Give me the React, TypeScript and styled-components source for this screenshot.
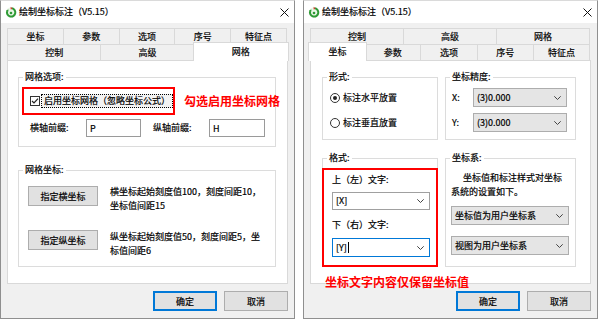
import styled, { createGlobalStyle, css } from 'styled-components';

const GlobalStyle = createGlobalStyle`
  html, body {
    margin: 0;
    background: #ffffff;
  }
  body {
    font-family: "Noto Sans CJK SC", "Microsoft YaHei", sans-serif;
    font-size: 9px;
    color: #000;
    -webkit-text-stroke: 0.2px currentColor;
  }
  * {
    box-sizing: border-box;
  }
`;

const Desktop = styled.div`
  display: flex;
  gap: 8px;
  width: 600px;
  height: 320px;
`;

const Window = styled.div`
  width: 295px;
  height: 319px;
  display: flex;
  flex-direction: column;
  background: #f0f0f0;
  border: 1px solid #8f8f8f;
  border-top-color: #dadada;
`;

const TitleBar = styled.div`
  height: 22px;
  flex: none;
  display: flex;
  align-items: center;
  gap: 2px;
  padding: 0 5px 0 4px;
  background: #fff;

  & .title {
    flex: 1;
    line-height: 12px;
  }
`;

const Body = styled.div`
  flex: 1;
  display: flex;
  flex-direction: column;
  padding: 5px 6px 0;
`;

const Tabs = styled.div`
  width: 280px;
  display: flex;
  flex-direction: column;
`;

const TabRow = styled.div`
  display: flex;
  height: 16px;
`;

const Tab = styled.div<{ $active?: boolean }>`
  flex: 1 1 0;
  min-width: 0;
  display: flex;
  align-items: center;
  justify-content: center;
  background: #f0f0f0;
  border: 1px solid #d9d9d9;
  border-bottom: none;
  margin-left: -1px;
  line-height: 12px;

  &:first-child {
    margin-left: 0;
  }

  ${(p) =>
    p.$active &&
    css`
      && {
        flex-basis: 4px;
        position: relative;
        z-index: 1;
        margin: -2px -2px -1px;
        background: #fff;
      }
    `}
`;

const Panel = styled.div<{ $pad: string }>`
  position: relative;
  height: 224px;
  background: #fff;
  border: 1px solid #d9d9d9;
  padding: ${(p) => p.$pad};
`;

const Group = styled.fieldset<{ $gap?: number }>`
  margin: ${(p) => p.$gap ?? 0}px 0 0;
  padding: 0;
  min-width: 0;
  border: 1px solid #dcdcdc;
`;

const Legend = styled.legend`
  margin-left: 4px;
  padding: 0 2px;
  line-height: 12px;
`;

const GroupBody = styled.div<{ $pad: string }>`
  display: flex;
  flex-direction: column;
  padding: ${(p) => p.$pad};
`;

const Row = styled.div<{ $top?: number; $gap?: number; $align?: string; $indent?: number }>`
  display: flex;
  align-items: ${(p) => p.$align ?? 'center'};
  gap: ${(p) => p.$gap ?? 0}px;
  margin-top: ${(p) => p.$top ?? 0}px;
  padding-left: ${(p) => p.$indent ?? 0}px;
`;

const RedFrame = styled.div<{ $w?: number }>`
  border: 2px solid #ff0000;
  ${(p) => p.$w && `width: ${p.$w}px;`}
`;

const CheckRow = styled(RedFrame)`
  height: 28px;
  display: flex;
  align-items: center;
  padding-left: 6px;
  margin-left: 3px;
`;

const CheckLabel = styled.span`
  margin-left: 1px;
  padding: 0 2px;
  line-height: 12px;
  border: 1px dotted #000;
  background: #f3f3f3;
  white-space: nowrap;
`;

const Note = styled.span`
  font-size: 12px;
  font-weight: bold;
  line-height: 16px;
  color: #ff0000;
  white-space: nowrap;
  -webkit-text-stroke: 0;
`;

const FloatingNote = styled(Note)`
  position: absolute;
  left: 14px;
  top: 213px;
`;

const FieldLabel = styled.span<{ $w: number; $left?: number; $top?: number }>`
  width: ${(p) => p.$w}px;
  margin-left: ${(p) => p.$left ?? 0}px;
  margin-top: ${(p) => p.$top ?? 0}px;
  line-height: 12px;
  white-space: nowrap;
`;

const TextBox = styled.div<{ $w: number }>`
  width: ${(p) => p.$w}px;
  height: 18px;
  display: flex;
  align-items: center;
  padding-left: 3px;
  background: #fff;
  border: 1px solid #9a9a9a;
`;

const Button = styled.button<{ $w?: number; $default?: boolean; $top?: number }>`
  flex: none;
  width: ${(p) => p.$w ?? 64}px;
  height: 20px;
  margin-top: ${(p) => p.$top ?? 0}px;
  padding: 0;
  font: inherit;
  color: #000;
  background: #e1e1e1;
  border: 1px solid ${(p) => (p.$default ? '#0078d7' : '#adadad')};
  ${(p) => p.$default && 'box-shadow: inset 0 0 0 1px #0078d7;'}
`;

const Desc = styled.div`
  line-height: 14px;
  white-space: nowrap;
`;

const Footer = styled.div`
  display: flex;
  justify-content: flex-end;
  gap: 7px;
  width: 281px;
  margin-top: 7px;
`;

const Columns = styled.div`
  display: grid;
  grid-template-columns: 116px 131px;
  column-gap: 7px;
  row-gap: 12px;
`;

const Radio = styled.span<{ $on?: boolean }>`
  width: 10px;
  height: 10px;
  border-radius: 50%;
  border: 1px solid #333;
  display: flex;
  align-items: center;
  justify-content: center;

  &::after {
    content: '';
    width: 4px;
    height: 4px;
    border-radius: 50%;
    background: ${(p) => (p.$on ? '#222' : 'transparent')};
  }
`;

const OptionRow = styled.div<{ $top: number }>`
  height: 19px;
  display: flex;
  align-items: center;
  gap: 3px;
  margin-top: ${(p) => p.$top}px;
  line-height: 12px;
`;

type ComboKind = 'list' | 'edit' | 'focus';

const ComboBox = styled.div<{ $kind: ComboKind; $w: number; $h?: number; $top?: number }>`
  width: ${(p) => p.$w}px;
  height: ${(p) => p.$h ?? 19}px;
  margin-top: ${(p) => p.$top ?? 0}px;
  display: flex;
  align-items: center;
  justify-content: space-between;
  padding: 0 5px 0 3px;
  line-height: 12px;
  white-space: nowrap;
  background: ${(p) => (p.$kind === 'list' ? '#e5e5e5' : '#fff')};
  border: 1px solid
    ${(p) => (p.$kind === 'list' ? '#adadad' : p.$kind === 'edit' ? '#a0a0a0' : '#0078d7')};
`;

const Caret = styled.span`
  display: inline-block;
  width: 1px;
  height: 11px;
  margin-left: 1px;
  vertical-align: -2px;
  background: #000;
`;

const Para = styled.div`
  margin-top: 7px;
  line-height: 14px;
  white-space: nowrap;

  & .lead {
    padding-left: 12px;
  }
`;

const Stack = styled.div<{ $pad: string }>`
  display: flex;
  flex-direction: column;
  align-items: flex-start;
  padding: ${(p) => p.$pad};
`;

const FormatFrame = styled(RedFrame)`
  margin: 4px -1px -1px;
  padding: 2px 6px 8px 8px;
  display: flex;
  flex-direction: column;
  align-items: flex-start;
`;

function AppIcon() {
  return (
    <svg width="12" height="12" viewBox="0 0 12 12">
      <circle cx="6" cy="6.5" r="5.2" fill="#e9f5e5" />
      <path d="M6.5 2.2 A4.2 4.2 0 1 1 2.1 5.2" fill="none" stroke="#2e9a35" strokeWidth="2" />
      <path d="M1 4.2 L3.6 3.4 L3 6.4 Z" fill="#2e9a35" />
      <path d="M5.6 0.8 L7.6 2.4 L5.6 3.6 Z" fill="#d8342a" />
      <circle cx="6" cy="7" r="1.3" fill="#2e9a35" />
    </svg>
  );
}

function CloseIcon() {
  return (
    <svg width="9" height="9" viewBox="0 0 9 9">
      <path d="M0.5 0.5 L8.5 8.5 M8.5 0.5 L0.5 8.5" stroke="#111" strokeWidth="1" />
    </svg>
  );
}

function Chevron() {
  return (
    <svg width="7" height="4" viewBox="0 0 7 4">
      <path d="M0.3 0.3 L3.5 3.5 L6.7 0.3" fill="none" stroke="#444" strokeWidth="1" />
    </svg>
  );
}

function CheckMark() {
  return (
    <svg width="10" height="10" viewBox="0 0 10 10">
      <rect x="0.5" y="0.5" width="9" height="9" fill="#fff" stroke="#333" />
      <path d="M2 5 L4 7 L8 2.6" fill="none" stroke="#222" strokeWidth="1.2" />
    </svg>
  );
}

function Combo({
  kind,
  w,
  h,
  top,
  children,
}: {
  kind: ComboKind;
  w: number;
  h?: number;
  top?: number;
  children: React.ReactNode;
}) {
  return (
    <ComboBox $kind={kind} $w={w} $h={h} $top={top}>
      <span>{children}</span>
      <Chevron />
    </ComboBox>
  );
}

const BACK_TABS = ['坐标', '参数', '选项', '序号', '特征点'];
const FRONT_TABS = ['控制', '高级', '网格'];

function Frame({ children }: { children: React.ReactNode }) {
  return (
    <Window>
      <TitleBar>
        <AppIcon />
        <span className="title">绘制坐标标注（V5.15）</span>
        <CloseIcon />
      </TitleBar>
      <Body>
        {children}
        <Footer>
          <Button $default>确定</Button>
          <Button>取消</Button>
        </Footer>
      </Body>
    </Window>
  );
}

function GridWindow() {
  return (
    <Frame>
      <Tabs>
        <TabRow>
          {BACK_TABS.map((t) => (
            <Tab key={t}>{t}</Tab>
          ))}
        </TabRow>
        <TabRow>
          {FRONT_TABS.map((t) => (
            <Tab key={t} $active={t === '网格'}>
              {t}
            </Tab>
          ))}
        </TabRow>
      </Tabs>
      <Panel $pad="10px 11px 0 10px">
        <Group>
          <Legend>网格选项:</Legend>
          <GroupBody $pad="4px 0 9px">
            <Row $gap={9}>
              <CheckRow $w={159}>
                <CheckMark />
                <CheckLabel>启用坐标网格（忽略坐标公式）</CheckLabel>
              </CheckRow>
              <Note>勾选启用坐标网格</Note>
            </Row>
            <Row $top={4} $indent={11}>
              <FieldLabel $w={56}>横轴前缀:</FieldLabel>
              <TextBox $w={55}>P</TextBox>
              <FieldLabel $w={56} $left={12}>
                纵轴前缀:
              </FieldLabel>
              <TextBox $w={56}>H</TextBox>
            </Row>
          </GroupBody>
        </Group>
        <Group $gap={17}>
          <Legend>网格坐标:</Legend>
          <GroupBody $pad="9px 0 8px 9px">
            <Row $gap={12} $align="flex-start">
              <Button $w={70} $top={1}>
                指定横坐标
              </Button>
              <Desc>
                横坐标起始刻度值100，刻度间距10，
                <br />
                坐标值间距15
              </Desc>
            </Row>
            <Row $gap={12} $align="flex-start" $top={17}>
              <Button $w={70}>指定纵坐标</Button>
              <Desc>
                纵坐标起始刻度值50，刻度间距5，坐
                <br />
                标值间距6
              </Desc>
            </Row>
          </GroupBody>
        </Group>
      </Panel>
    </Frame>
  );
}

function CoordWindow() {
  return (
    <Frame>
      <Tabs>
        <TabRow>
          {FRONT_TABS.map((t) => (
            <Tab key={t}>{t}</Tab>
          ))}
        </TabRow>
        <TabRow>
          {BACK_TABS.map((t) => (
            <Tab key={t} $active={t === '坐标'}>
              {t}
            </Tab>
          ))}
        </TabRow>
      </Tabs>
      <Panel $pad="10px 0 0 11px">
        <Columns>
          <Group>
            <Legend>形式:</Legend>
            <Stack $pad="0 0 7px 7px">
              <OptionRow $top={5}>
                <Radio $on />
                标注水平放置
              </OptionRow>
              <OptionRow $top={6}>
                <Radio />
                标注垂直放置
              </OptionRow>
            </Stack>
          </Group>
          <Group>
            <Legend>坐标精度:</Legend>
            <Stack $pad="5px 0 7px 6px">
              <Row>
                <FieldLabel $w={21}>X:</FieldLabel>
                <Combo kind="list" w={94}>
                  (3)0.000
                </Combo>
              </Row>
              <Row $top={6}>
                <FieldLabel $w={21}>Y:</FieldLabel>
                <Combo kind="list" w={94}>
                  (3)0.000
                </Combo>
              </Row>
            </Stack>
          </Group>
          <Group>
            <Legend>格式:</Legend>
            <FormatFrame>
              <FieldLabel $w={90} $top={2}>
                上（左）文字:
              </FieldLabel>
              <Combo kind="edit" w={98} h={18} top={6}>
                [X]
              </Combo>
              <FieldLabel $w={90} $top={9}>
                下（右）文字:
              </FieldLabel>
              <Combo kind="focus" w={98} top={7}>
                [Y]
                <Caret />
              </Combo>
            </FormatFrame>
          </Group>
          <Group>
            <Legend>坐标系:</Legend>
            <Stack $pad="0 0 9px 5px">
              <Para>
                <span className="lead">坐标值和标注样式对坐标</span>
                <br />
                系统的设置如下。
              </Para>
              <Combo kind="list" w={118} top={7}>
                坐标值为用户坐标系
              </Combo>
              <Combo kind="list" w={118} top={11}>
                视图为用户坐标系
              </Combo>
            </Stack>
          </Group>
        </Columns>
        <FloatingNote>坐标文字内容仅保留坐标值</FloatingNote>
      </Panel>
    </Frame>
  );
}

export default function App() {
  return (
    <>
      <GlobalStyle />
      <Desktop>
        <GridWindow />
        <CoordWindow />
      </Desktop>
    </>
  );
}
